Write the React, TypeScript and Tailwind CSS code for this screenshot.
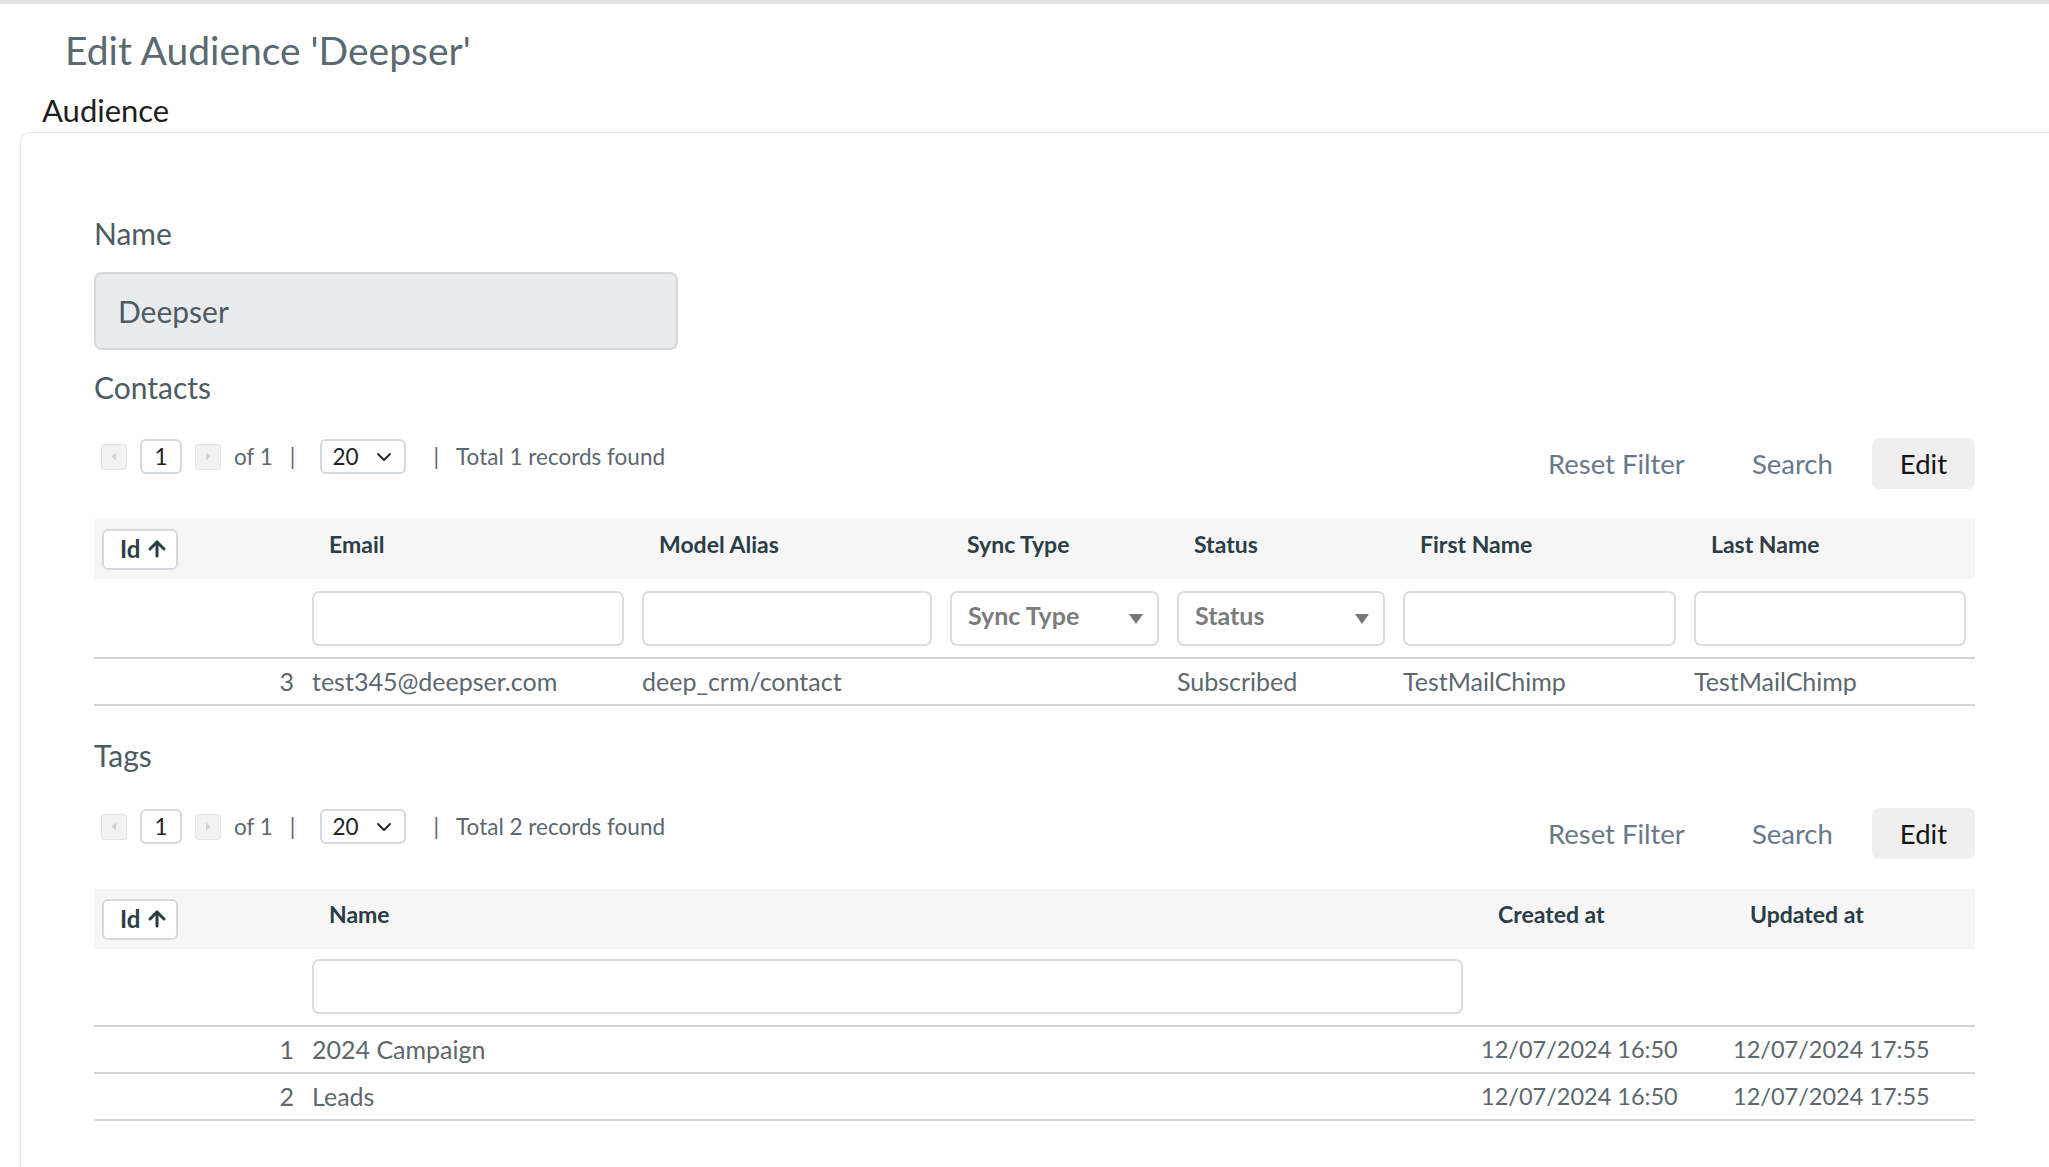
import React from 'react';
import { ArrowUp, ChevronDown } from 'lucide-react';

// Contacts grid: Id | Email | Model Alias | Sync Type | Status | First Name | Last Name
const contactCols = 'grid grid-cols-[209px_330px_308px_227px_226px_291px_290px]';
// Tags grid: Id | Name | Created at | Updated at
const tagCols = 'grid grid-cols-[209px_1169px_252px_251px]';

const Pager: React.FC<{ total: number }> = ({ total }) => (
  <div className="mt-[1px] flex h-[35px] items-center text-[22.5px] text-[#5c676e]">
    <span className="ml-[7px] flex h-[26px] w-[26px] items-center justify-center rounded-[3px] border border-[#e4e4e4] bg-[#f2f2f2]">
      <svg width="6" height="9" viewBox="0 0 6 9">
        <path d="M5 0.5 L0.5 4.5 L5 8.5Z" fill="#d2d2d2" />
      </svg>
    </span>
    <span className="ml-[13px] flex h-[35px] w-[42px] items-center justify-center rounded-[6px] border-2 border-[#d5dadf] text-[#222]">
      1
    </span>
    <span className="ml-[13px] flex h-[26px] w-[26px] items-center justify-center rounded-[3px] border border-[#e4e4e4] bg-[#f2f2f2]">
      <svg width="6" height="9" viewBox="0 0 6 9">
        <path d="M1 0.5 L5.5 4.5 L1 8.5Z" fill="#d2d2d2" />
      </svg>
    </span>
    <span className="ml-[13px]">of 1</span>
    <span className="ml-[17px] text-[#666]">|</span>
    <span className="ml-[25px] flex h-[35px] w-[86px] items-center justify-between rounded-[6px] border-2 border-[#d5dadf] pl-[10px] pr-[8px] text-[#222]">
      20
      <ChevronDown className="h-[24px] w-[24px]" strokeWidth={1.8} />
    </span>
    <span className="ml-[27px] text-[#666]">|</span>
    <span className="ml-[17px]">Total {total} records found</span>
  </div>
);

const Toolbar: React.FC<{ total: number }> = ({ total }) => (
  <div className="flex items-start justify-between">
    <Pager total={total} />
    <div className="flex h-[51px] items-center gap-[11px] text-[27.5px]">
      <button className="h-[51px] px-[28px] text-[#6a7889]">Reset Filter</button>
      <button className="h-[51px] px-[28px] text-[#6a7889]">Search</button>
      <button className="h-[51px] rounded-[7px] bg-[#efefef] px-[28px] text-[#151515]">Edit</button>
    </div>
  </div>
);

const IdHeader = () => (
  <div className="pl-[8px]">
    <div className="flex h-[41px] w-[76px] items-center rounded-[6px] border-2 border-[#d5d9dd] bg-white pl-[16px] text-[24px] font-bold text-[#2b3d45]">
      Id
      <ArrowUp className="ml-[5px] h-[24px] w-[24px]" strokeWidth={3} />
    </div>
  </div>
);

const Th: React.FC<{ children?: React.ReactNode }> = ({ children }) => (
  <div className="pb-[10px] pl-[26px] text-[23px] font-bold text-[#2b3d45]">{children}</div>
);

const FilterInput = () => (
  <div className="px-[9px]">
    <div className="h-[55px] w-full rounded-[7px] border-2 border-[#d8dde2] bg-white" />
  </div>
);

const FilterSelect: React.FC<{ label: string }> = ({ label }) => (
  <div className="px-[9px]">
    <div className="flex h-[55px] w-full items-center justify-between rounded-[7px] border-2 border-[#d8dde2] bg-white pb-[4px] pl-[16px] pr-[14px] text-[25px] font-bold text-[#7c7c7c]">
      {label}
      <svg className="mt-[6px]" width="14" height="10" viewBox="0 0 14 10">
        <path d="M0 0 H14 L7 10Z" fill="#777" />
      </svg>
    </div>
  </div>
);

const Td: React.FC<{ children?: React.ReactNode; right?: boolean; className?: string }> = ({
  children,
  right,
  className = '',
}) => <div className={`${right ? 'pr-[9px] text-right' : 'pl-[9px]'} ${className}`}>{children}</div>;

export default function App() {
  return (
    <div className="h-[1167px] overflow-hidden bg-white font-['Lato',sans-serif]">
      <div className="h-[4px] bg-[#e2e2e2]" />
      <h1 className="mt-[22px] pl-[65px] text-[39px] leading-[48px] text-[#5b6a70]">Edit Audience 'Deepser'</h1>
      <div className="mt-[17px] pl-[42px] text-[31px] leading-[38px] text-[#1e1e1e]">Audience</div>

      <div className="ml-[20px] mt-[3px] h-[1100px] w-[2060px] rounded-tl-[10px] border border-[#e6e6e6] pl-[73px] pt-[82px] shadow-[0_0_3px_rgba(0,0,0,0.04)]">
        <div className="w-[1881px]">
          {/* Name */}
          <div className="text-[30px] leading-[36px] text-[#4d5b62]">Name</div>
          <div className="mt-[21px] flex h-[78px] w-[584px] items-center rounded-[8px] border-2 border-[#d3d8dd] bg-[#e9ecef] px-[22px] text-[30px] text-[#4f5b62]">
            Deepser
          </div>

          {/* Contacts */}
          <div className="mt-[19px] text-[30px] leading-[36px] text-[#4d5b62]">Contacts</div>
          <div className="mt-[33px]">
            <Toolbar total={1} />
          </div>

          <div className="mt-[30px]">
            <div className={`${contactCols} h-[60px] items-center bg-[#f6f6f6]`}>
              <IdHeader />
              <Th>Email</Th>
              <Th>Model Alias</Th>
              <Th>Sync Type</Th>
              <Th>Status</Th>
              <Th>First Name</Th>
              <Th>Last Name</Th>
            </div>
            <div className={`${contactCols} h-[80px] items-center border-b-2 border-[#d4d4d4]`}>
              <div />
              <FilterInput />
              <FilterInput />
              <FilterSelect label="Sync Type" />
              <FilterSelect label="Status" />
              <FilterInput />
              <FilterInput />
            </div>
            <div className={`${contactCols} h-[47px] items-center border-b-2 border-[#d4d4d4] pt-[1px] text-[25px] text-[#5c676e]`}>
              <Td right>3</Td>
              <Td>test345@deepser.com</Td>
              <Td>deep_crm/contact</Td>
              <Td />
              <Td>Subscribed</Td>
              <Td>TestMailChimp</Td>
              <Td>TestMailChimp</Td>
            </div>
          </div>

          {/* Tags */}
          <div className="mt-[31px] text-[30px] leading-[36px] text-[#4d5b62]">Tags</div>
          <div className="mt-[35px]">
            <Toolbar total={2} />
          </div>

          <div className="mt-[30px]">
            <div className={`${tagCols} h-[60px] items-center bg-[#f6f6f6]`}>
              <IdHeader />
              <Th>Name</Th>
              <Th>Created at</Th>
              <Th>Updated at</Th>
            </div>
            <div className={`${tagCols} h-[78px] items-center border-b-2 border-[#d4d4d4] pb-[2px]`}>
              <div />
              <FilterInput />
              <div />
              <div />
            </div>
            {[
              { id: 1, name: '2024 Campaign' },
              { id: 2, name: 'Leads' },
            ].map((t) => (
              <div
                key={t.id}
                className={`${tagCols} h-[47px] items-center border-b-2 border-[#d4d4d4] pt-[1px] text-[25px] text-[#5c676e]`}
              >
                <Td right>{t.id}</Td>
                <Td>{t.name}</Td>
                <Td className="text-[23.5px]">12/07/2024 16:50</Td>
                <Td className="text-[23.5px]">12/07/2024 17:55</Td>
              </div>
            ))}
          </div>
        </div>
      </div>
    </div>
  );
}
